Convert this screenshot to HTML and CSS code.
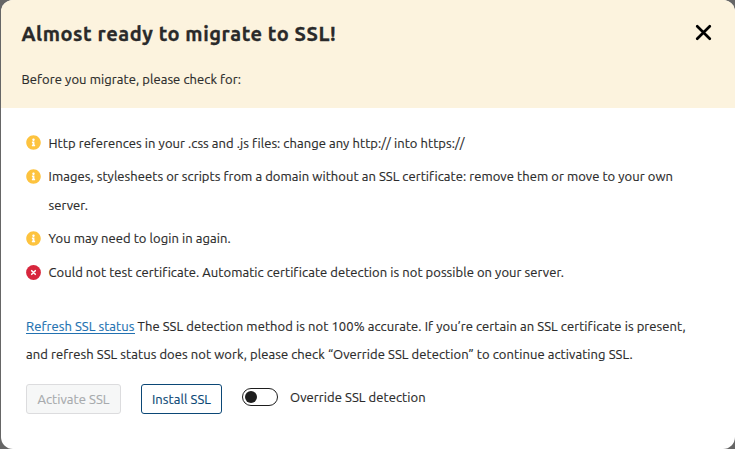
FILE: index.html
```
<!DOCTYPE html>
<html lang="en">
<head>
<meta charset="utf-8">
<title>Almost ready to migrate to SSL!</title>
<link rel="stylesheet" href="styles.css">
</head>
<body>
<svg class="defs" width="0" height="0">
  <symbol id="info" viewBox="0 0 512 512"><path d="M256 8C119 8 8 119 8 256s111 248 248 248 248-111 248-248S393 8 256 8zm0 110c23.200 0 42 18.800 42 42s-18.800 42-42 42-42-18.800-42-42 18.800-42 42-42zm56 254c0 6.600-5.400 12-12 12h-88c-6.600 0-12-5.400-12-12v-24c0-6.600 5.400-12 12-12h12v-64h-12c-6.600 0-12-5.400-12-12v-24c0-6.600 5.400-12 12-12h64c6.600 0 12 5.400 12 12v100h12c6.600 0 12 5.400 12 12v24z"/></symbol>
  <symbol id="error" viewBox="0 0 15 15"><circle cx="7.500" cy="7.500" r="7.400"/><path d="M5.700 5.700l3.600 3.600M9.300 5.700L5.700 9.300" stroke="#fff" stroke-width="1.600" stroke-linecap="round"/></symbol>
</svg>
<main class="modal">
  <header class="header">
    <div class="title-row">
      <h1>Almost ready to migrate to SSL!</h1>
      <button class="close" aria-label="Close"><svg width="17" height="17" viewBox="0 0 17 17"><path d="M2.200 2.200l12.600 12.600M14.800 2.200L2.200 14.800"/></svg></button>
    </div>
    <p>Before you migrate, please check for:</p>
  </header>
  <section class="content">
    <ul>
      <li><svg class="icon"><use href="#info"/></svg><span>Http references in your .css and .js files: change any http:// into https://</span></li>
      <li><svg class="icon"><use href="#info"/></svg><span>Images, stylesheets or scripts from a domain without an SSL certificate: remove them or move to your own<br>server.</span></li>
      <li><svg class="icon"><use href="#info"/></svg><span>You may need to login in again.</span></li>
      <li><svg class="icon error"><use href="#error"/></svg><span>Could not test certificate. Automatic certificate detection is not possible on your server.</span></li>
    </ul>
    <p class="note"><a href="#">Refresh SSL status</a> The SSL detection method is not 100% accurate. If you’re certain an SSL certificate is present,<br>and refresh SSL status does not work, please check “Override SSL detection” to continue activating SSL.</p>
    <div class="actions">
      <button class="button" disabled>Activate SSL</button>
      <button class="button install">Install SSL</button>
      <span class="switch"></span>
      <span class="label">Override SSL detection</span>
    </div>
  </section>
</main>
</body>
</html>
```
FILE: styles.css
```
* { box-sizing: border-box; }
body {
  margin: 0;
  height: 449px;
  overflow: hidden;
  background: #666;
  color: #2a2a2a;
  font: 13px/28px Ubuntu, "Noto Sans", sans-serif;
  letter-spacing: 0.077px;
  -webkit-text-stroke: 0.15px;
}
.defs { position: absolute; }
.modal {
  height: 449px;
  margin-left: 1px;
  overflow: hidden;
  border-radius: 12px;
  background: #fff;
}
.header {
  height: 108px;
  padding: 20px 23px 0 20.5px;
  background: #fcf3de;
}
.title-row { display: flex; justify-content: space-between; }
h1 {
  margin: 0;
  font-size: 20px;
  line-height: 28px;
  letter-spacing: 0.55px;
  -webkit-text-stroke: 0.3px;
}
.close {
  width: 17px;
  height: 17px;
  margin-top: 3.5px;
  padding: 0;
  border: 0;
  background: none;
}
.close svg { display: block; fill: none; stroke: #000; stroke-width: 2.7; stroke-linecap: round; }
.header p { margin: 17px 0 0; }
.content { padding: 21px 25px 0; }
ul { margin: 0; padding: 0; list-style: none; }
li {
  display: flex;
  gap: 7.5px;
  margin-bottom: 4.5px;
  line-height: 29px;
  letter-spacing: 0.06px;
  white-space: nowrap;
}
li + li span { margin-top: -1px; }
li:nth-child(2), li:nth-child(3) { margin-bottom: 5.5px; }
.icon { flex: none; width: 15px; height: 15px; margin-top: 6px; fill: #fdc33f; }
.icon.error { fill: #d7263d; }
.note { margin: 25px 0 0; white-space: nowrap; }
a { color: #2271b1; text-decoration: none; border-bottom: 1px solid #2271b1; }
.actions { display: flex; align-items: flex-start; margin-top: 16px; }
.button {
  width: 95px;
  height: 30px;
  padding: 0;
  border: 1px solid #dcdcde;
  border-radius: 3px;
  background: #f6f7f7;
  color: #a7aaad;
  font: inherit;
  letter-spacing: inherit;
}
.install { width: 81px; margin-left: 20px; border-color: #0b4776; background: #fff; color: #0b4776; }
.switch {
  display: flex;
  align-items: center;
  width: 36px;
  height: 18px;
  margin: 4px 12px 0 20px;
  padding-left: 2px;
  border: 1px solid #1e1e1e;
  border-radius: 9px;
}
.switch::before { content: ""; width: 12px; height: 12px; border-radius: 50%; background: #1e1e1e; }
.label { margin-top: -1px; }
```
